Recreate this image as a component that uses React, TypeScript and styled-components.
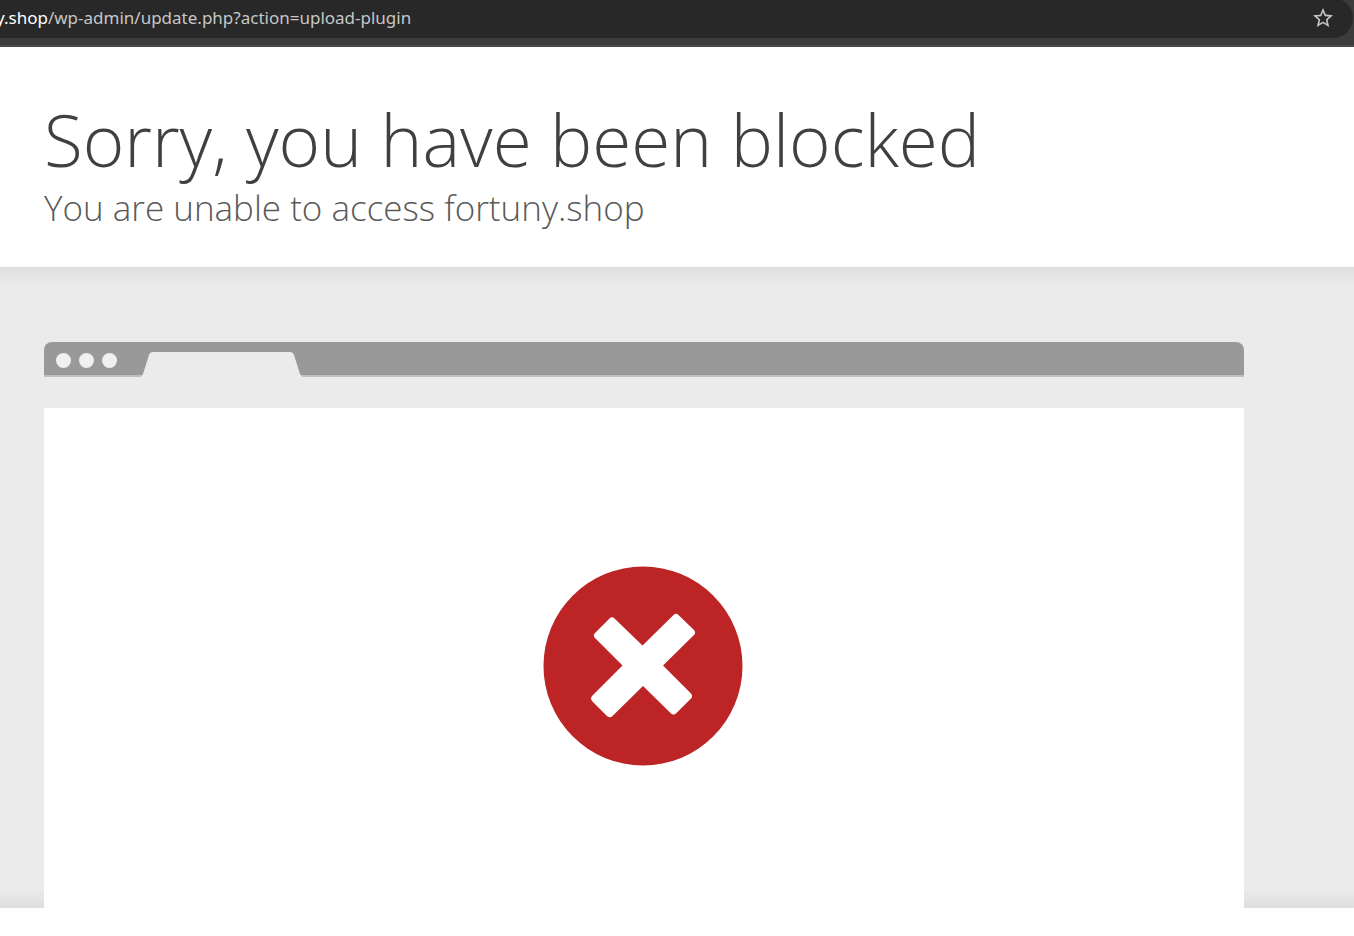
import React from "react";
import styled, { createGlobalStyle } from "styled-components";
import { MdStarBorder } from "react-icons/md";

const GlobalStyle = createGlobalStyle`
  * { box-sizing: border-box; }
  body {
    margin: 0;
    background: #ffffff;
    color: #404040;
    font-family: "Open Sans", "Noto Sans", sans-serif;
  }
`;

const Toolbar = styled.header`
  height: 47px;
  padding-right: 1px;
  background: #3c3c3c;
  border-bottom: 2px solid #484848;
  overflow: hidden;
`;

const AddressBar = styled.div`
  display: flex;
  align-items: center;
  justify-content: space-between;
  height: 40px;
  margin-top: -2px;
  padding-right: 18px;
  border-radius: 0 20px 20px 0;
  background: #282828;
`;

const Address = styled.a`
  margin-left: -4px;
  color: #c7c7c7;
  font-family: "Noto Sans", sans-serif;
  font-size: 17px;
  line-height: 24px;
  text-decoration: none;
  white-space: nowrap;
`;

const Host = styled.span`
  color: #ffffff;
`;

const StarButton = styled.button`
  display: flex;
  padding: 0;
  border: 0;
  background: none;
  color: #c7c7c7;
`;

const Heading = styled.section`
  padding: 50px 44px 35px;
`;

const Title = styled.h1`
  margin: 0;
  color: #404040;
  font-size: 71px;
  font-weight: 300;
  line-height: 86px;
`;

const Subtitle = styled.h2`
  margin: 0;
  color: #595959;
  font-size: 35px;
  font-weight: 300;
  line-height: 49px;
`;

const Band = styled.section`
  padding: 75px 110px 0 44px;
  background:
    linear-gradient(to bottom, #dedede, #ebebeb) top / 100% 18px no-repeat,
    linear-gradient(to top, #dedede, #ebebeb) bottom / 100% 18px no-repeat,
    #ebebeb;
`;

const WindowBar = styled.div`
  display: flex;
  height: 35px;
  padding-left: 12px;
  border-bottom: 2px solid #c0c0c0;
  border-radius: 8px 8px 0 0;
  background: #999999;
`;

const Dots = styled.div`
  display: flex;
  gap: 8px;
  padding-top: 11px;
  margin-right: 24px;
`;

const Dot = styled.span`
  width: 15px;
  height: 15px;
  border-radius: 50%;
  background: #f0f0f0;
`;

const TabShape = styled.svg`
  display: block;
  margin-top: 9px;
  overflow: visible;
`;

const Panel = styled.div`
  display: flex;
  justify-content: center;
  height: 500px;
  margin-top: 31px;
  padding: 158px 3px 0 0;
  background: #ffffff;
`;

export default function App() {
  return (
    <>
      <GlobalStyle />
      <Toolbar>
        <AddressBar>
          <Address href="#">
            <Host>y.shop</Host>/wp-admin/update.php?action=upload-plugin
          </Address>
          <StarButton aria-label="Bookmark this page">
            <MdStarBorder size={24} />
          </StarButton>
        </AddressBar>
      </Toolbar>
      <main>
        <Heading>
          <Title>Sorry, you have been blocked</Title>
          <Subtitle>You are unable to access fortuny.shop</Subtitle>
        </Heading>
        <Band>
          <WindowBar>
            <Dots>
              <Dot />
              <Dot />
              <Dot />
            </Dots>
            <TabShape width="160" height="26" viewBox="0 0 160 26">
              <path d="M0 25 Q1.500 24.500 2 23 L8 4 Q9 1 12 1 H149 Q152 1 153 4 L159 23 Q159.500 24.500 161 25 V26 H0 Z" fill="#ebebeb" />
            </TabShape>
          </WindowBar>
          <Panel>
            <svg width="200" height="200" viewBox="0 0 200 200" role="img" aria-label="Blocked">
              <circle cx="100" cy="100" r="99.500" fill="#bd2426" />
              <path
                d="M66.500 52.500 Q69 50 71.500 52.500 L99.500 79.500 L130.500 49 Q133 46.500 135.500 49 L150.500 63.500 Q153.500 66.500 151 69 L120 99.500 L147.500 127 Q150.500 130 148 132.500 L133.500 147 Q130.500 150 127.500 147 L100 120 L69.500 150 Q67 152.500 64 150 L49.500 135.500 Q46.500 132.500 49.500 129.500 L79.500 99.500 L52 72 Q49.500 69.500 52 67 Z"
                fill="#ffffff"
              />
            </svg>
          </Panel>
        </Band>
      </main>
    </>
  );
}
